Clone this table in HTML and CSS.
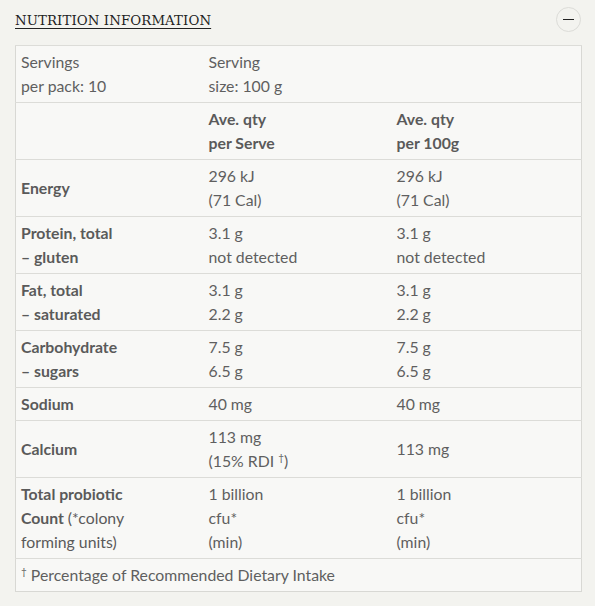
FILE: index.html
```html
<!DOCTYPE html>
<html lang="en">
<head>
  <meta charset="UTF-8">
  <title>Nutrition Information</title>
  <link rel="stylesheet" href="styles.css">
</head>
<body>
<section class="panel">
  <div class="panel-head">
    <h3 class="panel-title">NUTRITION INFORMATION</h3>
    <button class="toggle" aria-label="Collapse"><span class="toggle-bar"></span></button>
  </div>
  <table class="nutri">
    <colgroup>
      <col class="col-label">
      <col class="col-serve">
      <col>
    </colgroup>
    <tr>
      <td>Servings<br>per pack: 10</td>
      <td>Serving<br>size: 100 g</td>
      <td></td>
    </tr>
    <tr>
      <td></td>
      <th>Ave. qty<br>per Serve</th>
      <th>Ave. qty<br>per 100g</th>
    </tr>
    <tr>
      <th>Energy</th>
      <td>296 kJ<br>(71 Cal)</td>
      <td>296 kJ<br>(71 Cal)</td>
    </tr>
    <tr>
      <th>Protein, total<br>– gluten</th>
      <td>3.1 g<br>not detected</td>
      <td>3.1 g<br>not detected</td>
    </tr>
    <tr>
      <th>Fat, total<br>– saturated</th>
      <td>3.1 g<br>2.2 g</td>
      <td>3.1 g<br>2.2 g</td>
    </tr>
    <tr>
      <th>Carbohydrate<br>– sugars</th>
      <td>7.5 g<br>6.5 g</td>
      <td>7.5 g<br>6.5 g</td>
    </tr>
    <tr>
      <th>Sodium</th>
      <td>40 mg</td>
      <td>40 mg</td>
    </tr>
    <tr>
      <th>Calcium</th>
      <td>113 mg<br>(15% RDI <sup>†</sup>)</td>
      <td>113 mg</td>
    </tr>
    <tr>
      <th>Total probiotic<br>Count <span class="light">(*colony<br>forming units)</span></th>
      <td>1 billion<br>cfu*<br>(min)</td>
      <td>1 billion<br>cfu*<br>(min)</td>
    </tr>
    <tr>
      <td class="note" colspan="3"><sup>†</sup> Percentage of Recommended Dietary Intake</td>
    </tr>
  </table>
</section>
</body>
</html>
```

FILE: styles.css
```css
body{
  margin: 0;
  background-color: #f3f3ef;
  font-family: Lato, "Open Sans", sans-serif;
  color: #5f5f5f;
}
.panel{
  padding: 7px 14px 15px 15px;
}
.panel-head{
  display: flex;
  align-items: center;
  justify-content: space-between;
  height: 25px;
  margin-bottom: 13px;
}
.panel-title{
  margin: 0;
  padding-top: 2px;
  font-family: "DejaVu Serif", "Liberation Serif", serif;
  font-weight: normal;
  font-size: 13.3px;
  letter-spacing: 0.1px;
  color: #222;
  text-decoration: underline;
  text-underline-offset: 3px;
}
.toggle{
  width: 25px;
  height: 25px;
  border: 1px solid #dcdcd8;
  border-radius: 50%;
  background: transparent;
  padding: 0;
  display: flex;
  align-items: center;
  justify-content: center;
}
.toggle-bar{
  width: 11px;
  height: 1px;
  background: #222;
}
.nutri{
  width: 567px;
  border-collapse: collapse;
  background-color: #f8f8f6;
  border: 1px solid #d8d8d4;
  font-size: 15.8px;
  line-height: 24px;
  table-layout: fixed;
}
.col-label{
  width: 188px;
}
.col-serve{
  width: 188px;
}
.nutri td,
.nutri th{
  text-align: left;
  vertical-align: middle;
  padding: 4px 6px 4px 5px;
  border-top: 1px solid #dcdcd8;
}
.nutri th{
  font-weight: bold;
  color: #5a5a5a;
}
.light{
  font-weight: normal;
}
.nutri sup{
  font-size: 10px;
  line-height: 0;
  vertical-align: 6px;
}
```
